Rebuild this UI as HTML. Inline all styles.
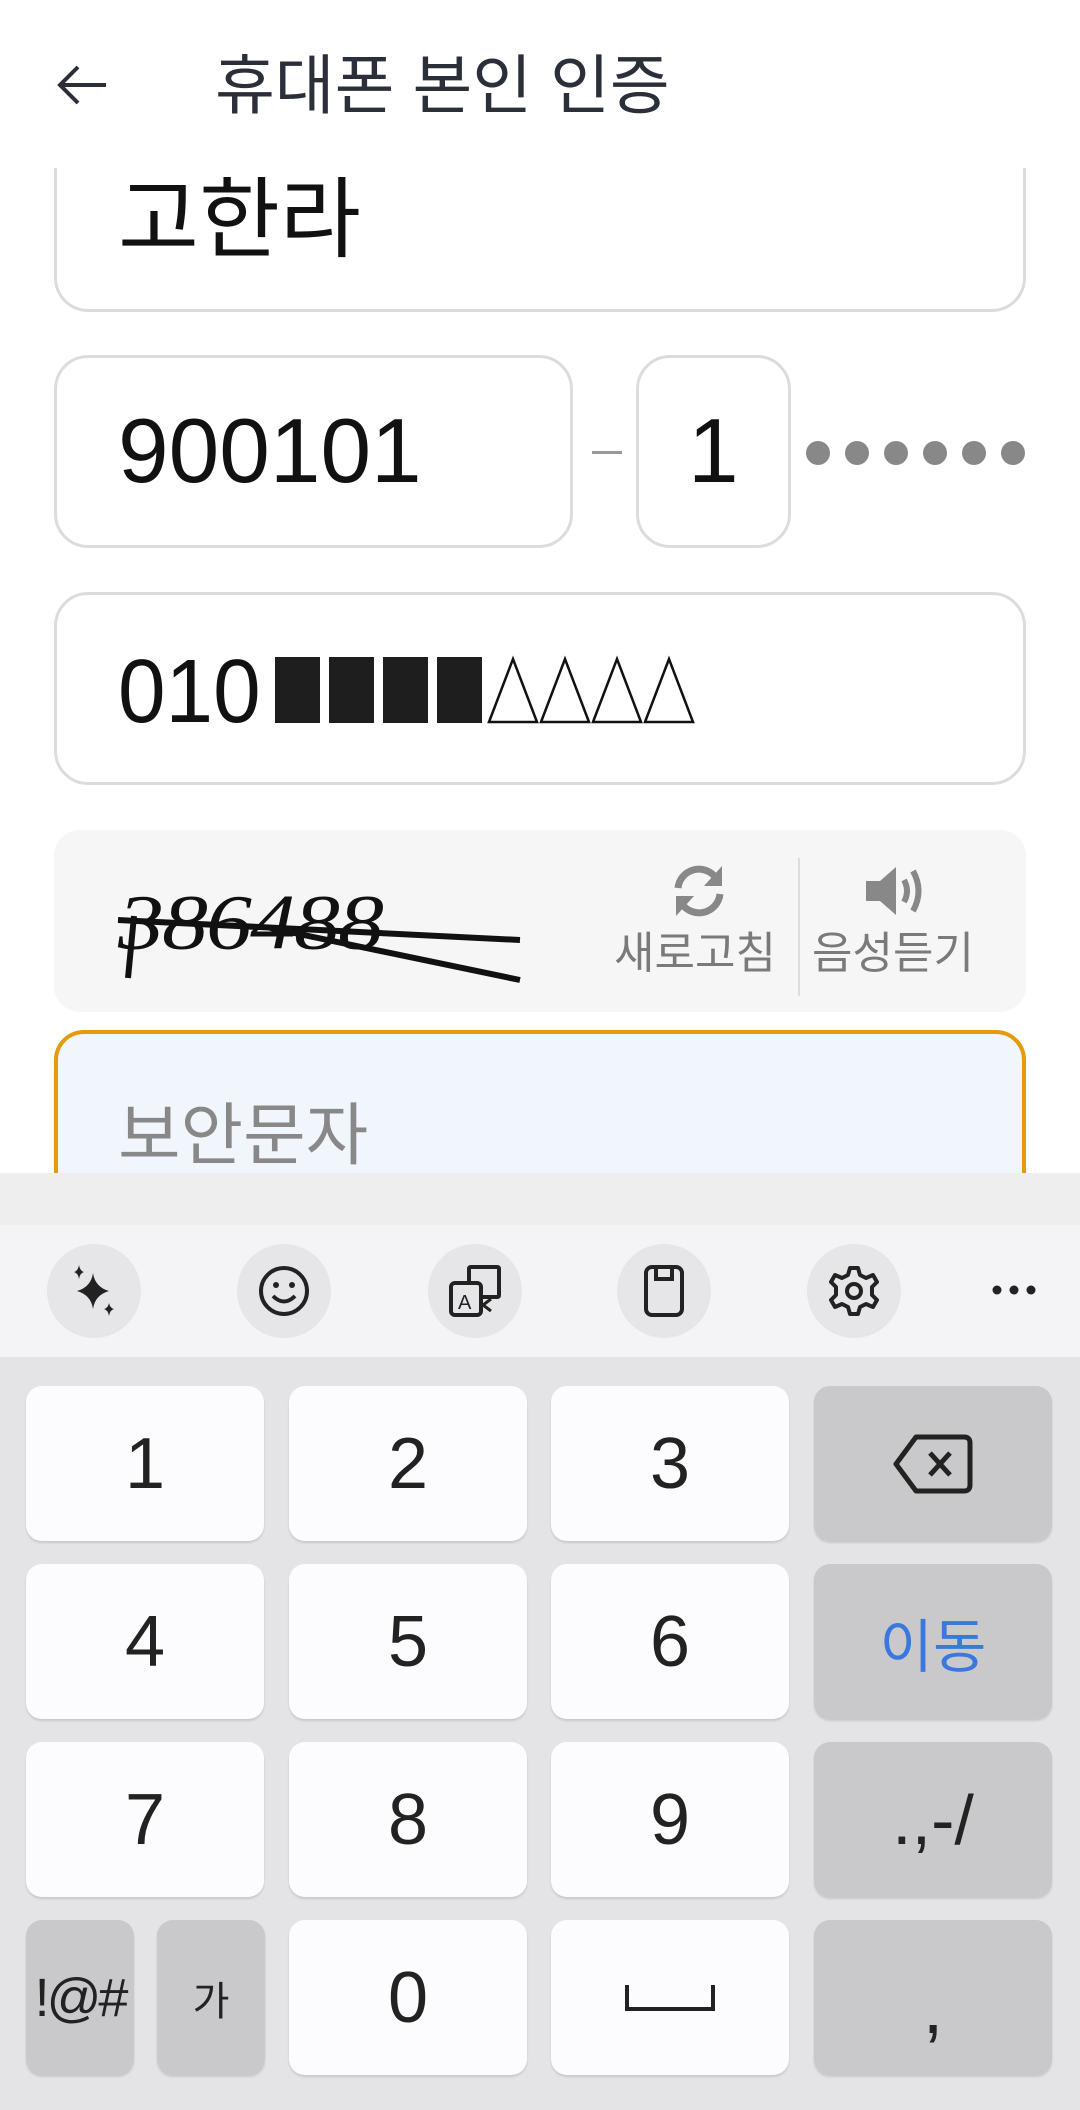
<!DOCTYPE html>
<html><head><meta charset="utf-8"><style>
*{margin:0;padding:0;box-sizing:border-box}
body{width:1080px;height:2110px;position:relative;background:#fff;overflow:hidden;font-family:"Liberation Sans","Noto Sans CJK KR",sans-serif}
.a{position:absolute}
.box{position:absolute;border:3px solid #dcdcdc;border-radius:34px;background:#fff}
.k{position:absolute;width:238px;height:155px;border-radius:16px;background:#fcfcfe;box-shadow:0 2px 2px rgba(0,0,0,.12);display:flex;align-items:center;justify-content:center;font-size:72px;color:#222}
.g{background:#c9c9cc}
.tb{position:absolute;top:1244px;width:94px;height:94px;border-radius:50%;background:#e6e6e9;display:flex;align-items:center;justify-content:center}
</style></head><body>
<svg class="a" style="left:54px;top:62px" width="56" height="46" viewBox="0 0 56 46"><path d="M52 23H6M24 5L6 23L24 41" fill="none" stroke="#2b2f3a" stroke-width="4"/></svg>
<div class="a" style="left:215px;top:48px;font-size:65px;color:#2b2f3a;line-height:76px">휴대폰 본인 인증</div>

<div class="box" style="left:54px;top:168px;width:972px;height:144px;border-top:none;border-radius:0 0 34px 34px"></div>
<div class="a" style="left:118px;top:168px;font-size:88px;line-height:104px;color:#111">고한라</div>

<div class="box" style="left:54px;top:355px;width:519px;height:193px"></div>
<div class="a" style="left:118px;top:400px;font-size:91px;line-height:104px;color:#111">900101</div>
<div class="a" style="left:592px;top:451px;width:30px;height:3px;background:#999"></div>
<div class="box" style="left:636px;top:355px;width:155px;height:193px"></div>
<div class="a" style="left:688px;top:400px;font-size:91px;line-height:104px;color:#111">1</div>
<svg class="a" style="left:805px;top:440px" width="222" height="26"><g fill="#888"><circle cx="13" cy="13" r="12"/><circle cx="52" cy="13" r="12"/><circle cx="91" cy="13" r="12"/><circle cx="130" cy="13" r="12"/><circle cx="169" cy="13" r="12"/><circle cx="208" cy="13" r="12"/></g></svg>

<div class="box" style="left:54px;top:592px;width:972px;height:193px"></div>
<div class="a" style="left:118px;top:640px;font-size:90px;line-height:104px;color:#111;transform:scaleX(.95);transform-origin:left">010</div>
<svg class="a" style="left:275px;top:655px" width="430" height="70"><g fill="#1e1e1e"><rect x="0" y="2" width="45" height="66"/><rect x="54" y="2" width="45" height="66"/><rect x="108" y="2" width="45" height="66"/><rect x="162" y="2" width="45" height="66"/></g><g fill="none" stroke="#111" stroke-width="2.5"><path d="M214 67L238 4L262 67Z"/><path d="M266 67L290 4L314 67Z"/><path d="M318 67L342 4L366 67Z"/><path d="M370 67L394 4L418 67Z"/></g></svg>

<div class="a" style="left:54px;top:830px;width:972px;height:182px;background:#f6f6f6;border-radius:26px"></div>
<svg class="a" style="left:100px;top:860px" width="430" height="130"><text x="18" y="90" font-family="Liberation Serif" font-style="italic" font-size="92" fill="#111" letter-spacing="-2" transform="scale(1,0.85) translate(0,14)">386488</text><path d="M18 60L420 80M170 68L420 120M34 56L28 118" stroke="#111" stroke-width="6" fill="none"/></svg>
<svg class="a" style="left:670px;top:862px" width="58" height="58" viewBox="0 0 58 58"><g fill="none" stroke="#888" stroke-width="7"><path d="M8 26A21 21 0 0 1 46 16"/><path d="M50 32A21 21 0 0 1 12 42"/></g><path d="M52 4V24H34Z" fill="#888"/><path d="M6 54V34H24Z" fill="#888"/></svg>
<div class="a" style="left:614px;top:926px;font-size:44px;color:#7a7a7a;line-height:56px">새로고침</div>
<div class="a" style="left:798px;top:858px;width:2px;height:138px;background:#ddd"></div>
<svg class="a" style="left:862px;top:863px" width="68" height="56" viewBox="0 0 68 56"><path d="M4 18H18L34 4V52L18 38H4Z" fill="#888"/><g fill="none" stroke="#888" stroke-width="6"><path d="M42 17Q48 28 42 39"/><path d="M51 8Q62 28 51 48"/></g></svg>
<div class="a" style="left:812px;top:926px;font-size:44px;color:#7a7a7a;line-height:56px">음성듣기</div>

<div class="a" style="left:54px;top:1030px;width:972px;height:200px;background:#f1f6fd;border:4px solid #e69b0f;border-radius:30px"></div>
<div class="a" style="left:118px;top:1096px;font-size:68px;color:#888;line-height:80px">보안문자</div>

<div class="a" style="left:0;top:1173px;width:1080px;height:52px;background:#eeeeee"></div>
<div class="a" style="left:0;top:1225px;width:1080px;height:132px;background:#f4f4f6"></div>
<div class="tb" style="left:47px"><svg width="50" height="56" viewBox="0 0 50 56"><path d="M24 10Q26 24 40 28Q26 32 24 46Q22 32 8 28Q22 24 24 10Z" fill="#222"/><path d="M10 2Q11 8 15 9Q11 10 10 16Q9 10 5 9Q9 8 10 2Z" fill="#222"/><path d="M40 40Q41 45 45 46Q41 47 40 53Q39 47 35 46Q39 45 40 40Z" fill="#222"/></svg></div>
<div class="tb" style="left:237px"><svg width="54" height="54" viewBox="0 0 54 54"><circle cx="27" cy="27" r="23" fill="none" stroke="#222" stroke-width="4"/><circle cx="19" cy="21" r="3" fill="#222"/><circle cx="35" cy="21" r="3" fill="#222"/><path d="M16 32Q27 43 38 32" fill="none" stroke="#222" stroke-width="4"/></svg></div>
<div class="tb" style="left:428px"><svg width="56" height="56" viewBox="0 0 56 56"><rect x="4" y="20" width="30" height="32" rx="4" fill="none" stroke="#222" stroke-width="4"/><path d="M22 20V6Q22 4 24 4H50Q52 4 52 6V32Q52 34 50 34H34" fill="none" stroke="#222" stroke-width="4"/><text x="11" y="46" font-size="20" font-family="Liberation Sans" fill="#222">A</text><path d="M44 36L36 42L44 48" fill="none" stroke="#222" stroke-width="3"/></svg></div>
<div class="tb" style="left:617px"><svg width="44" height="56" viewBox="0 0 44 56"><rect x="4" y="4" width="36" height="48" rx="6" fill="none" stroke="#222" stroke-width="4"/><path d="M14 4V16H30V4" fill="none" stroke="#222" stroke-width="4"/></svg></div>
<div class="tb" style="left:807px"><svg width="54" height="54" viewBox="0 0 54 54"><path d="M23 4H31L33 11L39 14L46 11L50 18L45 23V31L50 36L46 43L39 40L33 43L31 50H23L21 43L15 40L8 43L4 36L9 31V23L4 18L8 11L15 14L21 11Z" fill="none" stroke="#222" stroke-width="4" stroke-linejoin="round"/><circle cx="27" cy="27" r="7" fill="none" stroke="#222" stroke-width="4"/></svg></div>
<div class="a" style="left:990px;top:1282px"><svg width="48" height="16"><g fill="#222"><circle cx="7" cy="8" r="4.5"/><circle cx="24" cy="8" r="4.5"/><circle cx="41" cy="8" r="4.5"/></g></svg></div>

<div class="a" style="left:0;top:1357px;width:1080px;height:753px;background:#e4e4e6"></div>
<div class="k" style="left:26px;top:1386px">1</div>
<div class="k" style="left:289px;top:1386px">2</div>
<div class="k" style="left:551px;top:1386px">3</div>
<div class="k g" style="left:814px;top:1386px"><svg width="82" height="62" viewBox="0 0 82 62"><path d="M24 4H72Q78 4 78 10V52Q78 58 72 58H24L4 31Z" fill="none" stroke="#222" stroke-width="5" stroke-linejoin="round"/><path d="M38 20L58 42M58 20L38 42" stroke="#222" stroke-width="5"/></svg></div>
<div class="k" style="left:26px;top:1564px">4</div>
<div class="k" style="left:289px;top:1564px">5</div>
<div class="k" style="left:551px;top:1564px">6</div>
<div class="k g" style="left:814px;top:1564px;color:#3b78dc;font-size:58px">이동</div>
<div class="k" style="left:26px;top:1742px">7</div>
<div class="k" style="left:289px;top:1742px">8</div>
<div class="k" style="left:551px;top:1742px">9</div>
<div class="k g" style="left:814px;top:1742px;font-size:70px">.,-/</div>
<div class="k g" style="left:26px;top:1920px;width:108px;font-size:54px;letter-spacing:-3px">!@#</div>
<div class="k g" style="left:157px;top:1920px;width:108px;font-size:40px">가</div>
<div class="k" style="left:289px;top:1920px">0</div>
<div class="k" style="left:551px;top:1920px"><svg width="92" height="30"><path d="M3 2V26H89V2" fill="none" stroke="#222" stroke-width="4"/></svg></div>
<div class="k g" style="left:814px;top:1920px;font-size:74px;padding-top:20px">,</div>
</body></html>
